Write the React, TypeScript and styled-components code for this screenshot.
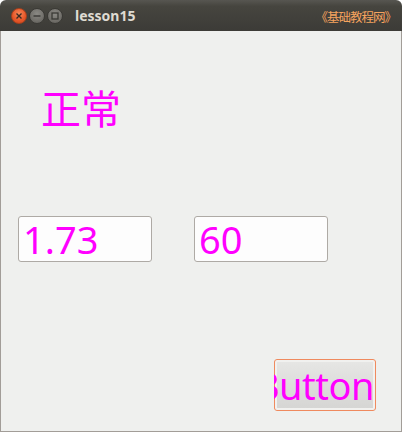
import React from 'react'
import styled, { createGlobalStyle } from 'styled-components'

const GlobalStyle = createGlobalStyle`
  html, body {
    margin: 0;
    padding: 0;
    background: #ffffff;
  }
`

const Window = styled.div`
  width: 402px;
  height: 432px;
  display: flex;
  flex-direction: column;
  font-family: 'Noto Sans', 'Noto Sans CJK SC', sans-serif;
`

const TitleBar = styled.div`
  height: 31px;
  flex: none;
  display: flex;
  align-items: center;
  padding: 0 6px 0 11px;
  box-sizing: border-box;
  border-radius: 6px 6px 0 0;
  background: linear-gradient(#575651 0%, #46453f 20%, #3c3b37 100%);
`

const Controls = styled.div`
  display: flex;
  gap: 2px;
  margin-top: 1px;
`

const Knob = styled.div<{ $close?: boolean }>`
  width: 16px;
  height: 16px;
  border-radius: 50%;
  display: flex;
  align-items: center;
  justify-content: center;
  box-sizing: border-box;
  border: 1px solid ${(p) => (p.$close ? '#a8401c' : '#3a3935')};
  background: ${(p) =>
    p.$close
      ? 'radial-gradient(circle at 50% 35%, #f68a5a 0%, #e8582a 55%, #c9441c 100%)'
      : 'radial-gradient(circle at 50% 35%, #8a8984 0%, #716f6a 60%, #5c5b56 100%)'};
`

const Title = styled.div`
  margin-left: 12px;
  color: #dfdbd2;
  font-weight: bold;
  font-size: 14px;
  flex: 1;
`

const Brand = styled.div`
  color: #f6a35e;
  font-size: 12.5px;
  letter-spacing: -1px;
  font-family: 'Noto Sans CJK SC', sans-serif;
  margin-top: 1px;
`

const Body = styled.div`
  flex: 1;
  background: #eff0ee;
  border: 1px solid #a29d98;
  border-top: none;
  display: flex;
  flex-direction: column;
  padding: 0 0 0 17px;
`

const Status = styled.div`
  margin: 48px 0 0 23px;
  color: #ff00ff;
  font-size: 40px;
  line-height: 56px;
  font-family: 'Noto Sans CJK SC', sans-serif;
`

const InputRow = styled.div`
  display: flex;
  gap: 42px;
  margin-top: 81px;
`

const Field = styled.input`
  width: 134px;
  height: 46px;
  box-sizing: border-box;
  border: 1px solid #aeaaa5;
  border-radius: 3px;
  background: #fdfdfd;
  color: #ff00ff;
  font-family: 'Noto Sans', sans-serif;
  font-size: 38px;
  padding: 0 0 0 4px;
  outline: none;
`

const ButtonRow = styled.div`
  display: flex;
  justify-content: flex-end;
  padding-right: 25px;
  margin-top: 97px;
`

const PushButton = styled.button`
  width: 102px;
  height: 52px;
  box-sizing: border-box;
  border: none;
  border-radius: 3px;
  padding: 0 2px 0 0;
  box-shadow: inset 0 0 0 1px #ef8a5e;
  background:
    linear-gradient(#e6e6e4 0%, #dededc 45%, #d6d6d4 100%) 3px 3px / calc(100% - 6px) calc(100% - 6px) no-repeat,
    #f1f1ef;
  overflow: hidden;
  display: flex;
  align-items: center;
  justify-content: flex-end;
  color: #ff00ff;
  font-family: 'Noto Sans', sans-serif;
  font-size: 38px;
  letter-spacing: -0.5px;
  white-space: nowrap;
`

const App: React.FC = () => {
  return (
    <>
      <GlobalStyle />
      <Window>
        <TitleBar>
          <Controls>
            <Knob $close>
              <svg width="8" height="8" viewBox="0 0 8 8">
                <path d="M1.5 1.5 L6.5 6.5 M6.5 1.5 L1.5 6.5" stroke="#3b2a22" strokeWidth="1.4" />
              </svg>
            </Knob>
            <Knob>
              <svg width="8" height="8" viewBox="0 0 8 8">
                <path d="M0.5 4 L7.5 4" stroke="#3a3935" strokeWidth="1.4" />
              </svg>
            </Knob>
            <Knob>
              <svg width="8" height="8" viewBox="0 0 8 8">
                <rect x="1" y="1" width="6" height="6" fill="none" stroke="#3a3935" strokeWidth="1.3" />
              </svg>
            </Knob>
          </Controls>
          <Title>lesson15</Title>
          <Brand>《基础教程网》</Brand>
        </TitleBar>
        <Body>
          <Status>正常</Status>
          <InputRow>
            <Field defaultValue="1.73" />
            <Field defaultValue="60" />
          </InputRow>
          <ButtonRow>
            <PushButton>Button</PushButton>
          </ButtonRow>
        </Body>
      </Window>
    </>
  )
}

export default App
